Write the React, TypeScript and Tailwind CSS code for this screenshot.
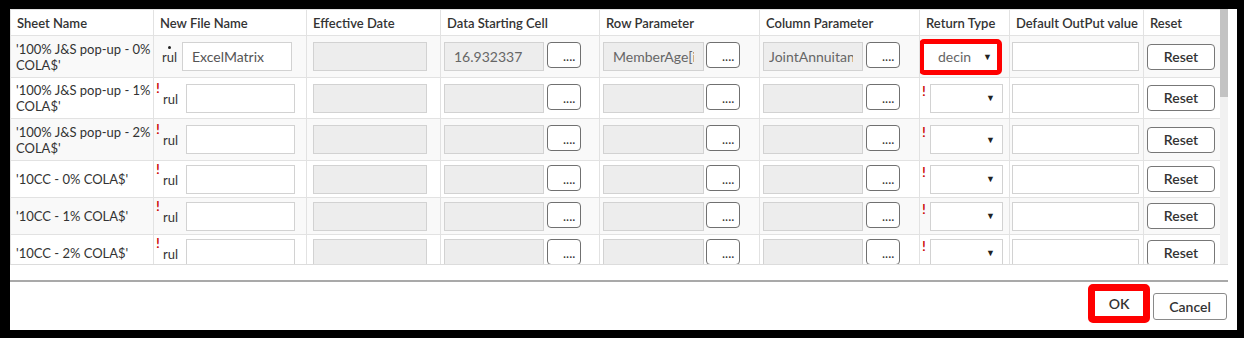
import React from "react";

type Row = {
  name: string;
  h: string;
  bg: string;
  first?: boolean;
};

const rows: Row[] = [
  { name: "'100% J&S pop-up - 0% COLA$'", h: "h-[42px]", bg: "bg-[#f9f9f9]", first: true },
  { name: "'100% J&S pop-up - 1% COLA$'", h: "h-[41px]", bg: "bg-white" },
  { name: "'100% J&S pop-up - 2% COLA$'", h: "h-[42px]", bg: "bg-[#f9f9f9]" },
  { name: "'10CC - 0% COLA$'", h: "h-[37px]", bg: "bg-white" },
  { name: "'10CC - 1% COLA$'", h: "h-[37px]", bg: "bg-[#f9f9f9]" },
  { name: "'10CC - 2% COLA$'", h: "h-[37px]", bg: "bg-white" },
];

const headers = [
  "Sheet Name",
  "New File Name",
  "Effective Date",
  "Data Starting Cell",
  "Row Parameter",
  "Column Parameter",
  "Return Type",
  "Default OutPut value",
  "Reset",
];

function DotsButton() {
  return (
    <button className="w-[34px] h-[26px] self-start border border-[#707070] rounded-[4px] bg-white text-left pl-[15px] text-[13px] leading-[26px] text-[#333] shrink-0">
      ....
    </button>
  );
}

function GrayInput({ value, w, pl }: { value?: string; w: string; pl?: string }) {
  return (
    <input
      readOnly
      value={value ?? ""}
      className={`${w} h-[29px] shrink-0 border border-[#d2d2d2] bg-[#ededed] ${pl ?? "pl-[9px]"} pr-[9px] text-[14px] text-[#666] outline-none`}
    />
  );
}

export default function App() {
  return (
    <div className="w-[1244px] h-[338px] bg-black pt-[9px] pl-[10px] font-['Lato','Noto_Sans',sans-serif] text-[#333]">
      <div className="w-[1227px] h-[321px] bg-white flex flex-col">
        {/* table area */}
        <div className="flex w-[1218px] h-[256px] border-b border-[#dcdcdc] overflow-hidden shrink-0">
          <div className="w-[1210px] overflow-hidden">
            <table className="table-fixed border-collapse w-[1210px]">
              <colgroup>
                <col className="w-[143px]" />
                <col className="w-[153px]" />
                <col className="w-[134px]" />
                <col className="w-[159px]" />
                <col className="w-[160px]" />
                <col className="w-[160px]" />
                <col className="w-[90px]" />
                <col className="w-[134px]" />
                <col className="w-[77px]" />
              </colgroup>
              <thead>
                <tr className="h-[26px] bg-white">
                  {headers.map((h) => (
                    <th
                      key={h}
                      className="border border-[#e2e2e2] text-left font-semibold text-[13px] leading-[16px] pl-[6px] pr-0 py-0 whitespace-nowrap overflow-hidden text-[#333]"
                    >
                      {h}
                    </th>
                  ))}
                </tr>
              </thead>
              <tbody>
                {rows.map((r, i) => (
                  <tr key={i} className={`${r.h} ${r.bg}`}>
                    {/* Sheet name */}
                    <td className="border border-[#e2e2e2] align-middle pl-[5px] pr-[2px] py-0 text-[13px] leading-[16px] text-[#333]">
                      {r.name}
                    </td>
                    {/* New file name */}
                    <td className="border border-[#e2e2e2] align-middle p-0">
                      {r.first ? (
                        <div className="flex items-baseline pl-[8px]">
                          <span className="relative w-[20px] text-[13px] leading-[16px] text-[#333] shrink-0">
                            rul
                            <span className="absolute left-[6px] top-[-3px] w-[3px] h-[3px] rounded-full bg-[#222]" />
                          </span>
                          <input
                            readOnly
                            value="ExcelMatrix"
                            className="w-[110px] h-[29px] border border-[#d2d2d2] bg-white pl-[9px] text-[14px] text-[#555] outline-none"
                          />
                        </div>
                      ) : (
                        <div className="flex items-baseline pl-[9px]">
                          <span className="relative w-[23px] text-[13px] leading-[16px] text-[#333] shrink-0">
                            <span className="absolute left-[-7px] top-[-11px] text-[14px] leading-[16px] font-semibold text-[#cc0000]">!</span>
                            rul
                          </span>
                          <input
                            readOnly
                            value=""
                            className="w-[109px] h-[29px] border border-[#d2d2d2] bg-white pl-[9px] text-[14px] text-[#555] outline-none"
                          />
                        </div>
                      )}
                    </td>
                    {/* Effective date */}
                    <td className="border border-[#e2e2e2] align-middle p-0 pl-[6px]">
                      <div className="flex">
                        <GrayInput w="w-[114px]" />
                      </div>
                    </td>
                    {/* Data starting cell */}
                    <td className="border border-[#e2e2e2] align-middle p-0 pl-[3px]">
                      <div className="flex gap-[3px]">
                        <GrayInput w="w-[100px]" value={r.first ? "16.932337" : ""} />
                        <DotsButton />
                      </div>
                    </td>
                    {/* Row parameter */}
                    <td className="border border-[#e2e2e2] align-middle p-0 pl-[3px]">
                      <div className="flex gap-[2px]">
                        <GrayInput w="w-[101px]" value={r.first ? "MemberAge[index]" : ""} />
                        <DotsButton />
                      </div>
                    </td>
                    {/* Column parameter */}
                    <td className="border border-[#e2e2e2] align-middle p-0 pl-[3px]">
                      <div className="flex gap-[3px]">
                        <GrayInput w="w-[100px]" pl="pl-[5px]" value={r.first ? "JointAnnuitantAge[index]" : ""} />
                        <DotsButton />
                      </div>
                    </td>
                    {/* Return type */}
                    <td className="border border-[#e2e2e2] align-middle p-0">
                      {r.first ? (
                        <div className="-ml-[1px] w-[83px] h-[36px] border-[5px] border-[#ff0000] rounded-[5px] bg-white flex items-center pl-[14px] pr-[5px]">
                          <span className="text-[14px] text-[#666] flex-1">decin</span>
                          <span className="text-[9px] text-[#222]">▼</span>
                        </div>
                      ) : (
                        <div className="relative flex pl-[10px]">
                          <span className="absolute left-[2px] top-[-1px] text-[14px] leading-[16px] font-semibold text-[#cc0000]">!</span>
                          <div className="w-[73px] h-[29px] border border-[#d2d2d2] bg-white flex items-center justify-end pr-[7px]">
                            <span className="text-[9px] text-[#222]">▼</span>
                          </div>
                        </div>
                      )}
                    </td>
                    {/* Default output */}
                    <td className="border border-[#e2e2e2] align-middle p-0 pl-[2px]">
                      <div className="flex">
                        <input
                          readOnly
                          value=""
                          className="w-[127px] h-[29px] border border-[#d2d2d2] bg-white outline-none"
                        />
                      </div>
                    </td>
                    {/* Reset */}
                    <td className="border border-[#e2e2e2] align-middle p-0 pl-[3px]">
                      <button className="w-[68px] h-[26px] border border-[#777] rounded-[4px] bg-white text-[14px] font-semibold leading-[24px] text-[#333]">
                        Reset
                      </button>
                    </td>
                  </tr>
                ))}
              </tbody>
            </table>
          </div>
          {/* scrollbar */}
          <div className="w-[8px] bg-[#f1f1f1] flex flex-col">
            <div className="h-[88px] bg-[#c3c3c3]" />
          </div>
        </div>

        {/* rule */}
        <div className="mt-[15px] w-[1218px] h-[2px] bg-[#a9a9a9]" />

        {/* footer */}
        <div className="flex justify-end items-start pr-[10px] pt-[2px]">
          <button className="w-[62px] h-[39px] border-[7px] border-[#ff0000] rounded-[5px] bg-white text-[14px] font-semibold text-[#333] leading-[25px]">
            OK
          </button>
          <button className="ml-[3px] mt-[9px] w-[74px] h-[27px] border border-[#8a8a8a] rounded-[3px] bg-white text-[14px] font-semibold text-[#333] leading-[25px]">
            Cancel
          </button>
        </div>
      </div>
    </div>
  );
}
